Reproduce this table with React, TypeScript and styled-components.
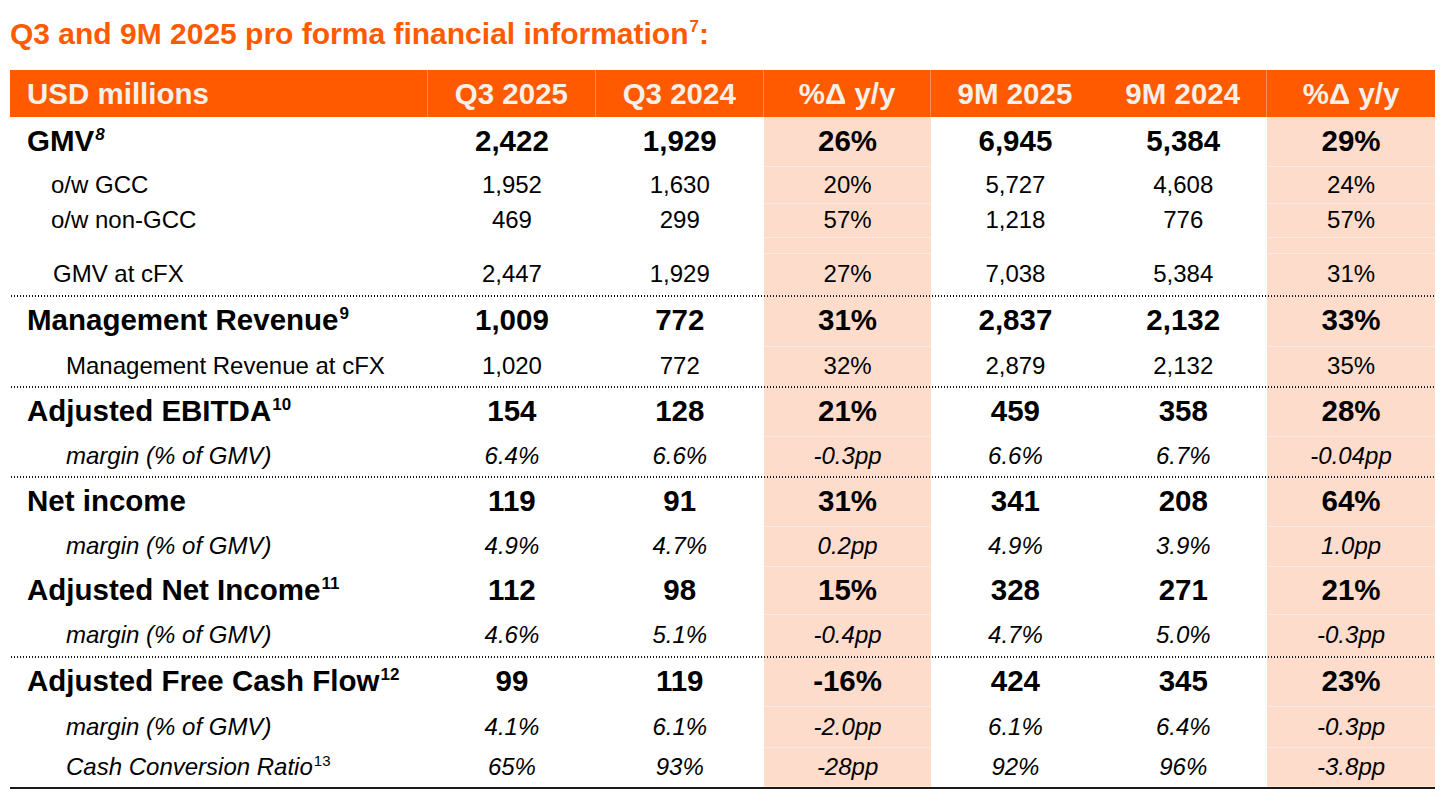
import React from "react";
import styled, { createGlobalStyle, css } from "styled-components";

const colors = {
    orange: "#ff5a00",
    shade: "#fddccc",
    shadeLine: "#fee8df",
    headText: "#f6f0e8",
    ink: "#000000",
};

const GlobalStyle = createGlobalStyle`
    html, body {
        margin: 0;
        padding: 0;
        background: #ffffff;
    }
    body {
        font-family: "Liberation Sans", Arial, sans-serif;
        color: ${colors.ink};
    }
`;

const Page = styled.div`
    width: 1445px;
    height: 805px;
    padding: 0 10px;
    box-sizing: border-box;
    overflow: hidden;
`;

const Title = styled.h2`
    margin: 0;
    height: 70px;
    padding-top: 17px;
    box-sizing: border-box;
    font-size: 30px;
    line-height: 34px;
    font-weight: 700;
    color: ${colors.orange};

    sup {
        font-size: 17px;
        line-height: 0;
        vertical-align: 12px;
        margin-left: 1px;
    }
`;

const Table = styled.div`
    width: 1425px;
    border-bottom: 2px solid #1a1a1a;
`;

const GRID = "418px repeat(6, 1fr)";

const HeadRow = styled.div`
    display: grid;
    grid-template-columns: ${GRID};
    height: 47px;
    background: ${colors.orange};
    color: ${colors.headText};
    font-size: 29.5px;
    font-weight: 700;
`;

const HeadCell = styled.div<{ $first?: boolean; $divider?: boolean }>`
    display: flex;
    align-items: center;
    justify-content: ${(p) => (p.$first ? "flex-start" : "center")};
    padding-left: ${(p) => (p.$first ? "17px" : "0")};
    border-right: 1px solid
        ${(p) => (p.$divider ? "rgba(255, 200, 170, 0.45)" : "transparent")};
    &:last-child {
        border-right: none;
    }
`;

type Kind = "main" | "sub" | "italic";

const Row = styled.div<{ $h: number; $dotted?: boolean }>`
    display: grid;
    grid-template-columns: ${GRID};
    height: ${(p) => p.$h}px;
    box-sizing: border-box;
    position: relative;
    ${(p) =>
        p.$dotted &&
        css`
            &::before {
                content: "";
                position: absolute;
                left: 0;
                right: 0;
                top: -1px;
                height: 2px;
                background-image: radial-gradient(circle, #1a1a1a 0.9px, transparent 1.1px);
                background-size: 3px 2px;
                z-index: 2;
            }
        `}
`;

const kindStyles = {
    main: css`
        font-size: 29.5px;
        font-weight: 700;
        padding-bottom: 3px;
    `,
    sub: css`
        font-size: 24px;
        font-weight: 400;
        padding-bottom: 2px;
    `,
    italic: css`
        font-size: 24px;
        font-weight: 400;
        font-style: italic;
        padding-bottom: 2px;
    `,
};

const Label = styled.div<{ $kind: Kind; $indent: number }>`
    display: flex;
    align-items: center;
    padding-left: ${(p) => p.$indent}px;
    white-space: nowrap;
    ${(p) => kindStyles[p.$kind]}
`;

const LabelText = styled.span`
    line-height: 1.15;
`;

const Sup = styled.sup<{ $italic?: boolean; $kind: Kind }>`
    font-size: ${(p) => (p.$kind === "main" ? "17px" : "15px")};
    font-style: ${(p) => (p.$italic ? "italic" : "normal")};
    font-weight: ${(p) => (p.$kind === "main" ? 700 : 400)};
    line-height: 0;
    vertical-align: ${(p) => (p.$kind === "main" ? "11px" : "9px")};
    margin-left: 1px;
`;

const Value = styled.div<{ $kind: Kind; $shaded?: boolean }>`
    display: flex;
    align-items: center;
    justify-content: center;
    ${(p) => kindStyles[p.$kind]}
    ${(p) =>
        p.$shaded &&
        css`
            background: ${colors.shade};
            box-shadow: inset 0 -1px 0 ${colors.shadeLine};
        `}
`;

interface Line {
    label: string;
    sup?: string;
    supItalic?: boolean;
    kind: Kind;
    indent: number;
    h: number;
    dotted?: boolean;
    vals: string[];
}

const rows: Line[] = [
    { label: "GMV", sup: "8", supItalic: true, kind: "main", indent: 17, h: 50, vals: ["2,422", "1,929", "26%", "6,945", "5,384", "29%"] },
    { label: "o/w GCC", kind: "sub", indent: 41, h: 37, vals: ["1,952", "1,630", "20%", "5,727", "4,608", "24%"] },
    { label: "o/w non-GCC", kind: "sub", indent: 41, h: 34, vals: ["469", "299", "57%", "1,218", "776", "57%"] },
    { label: "", kind: "sub", indent: 41, h: 16, vals: ["", "", "", "", "", ""] },
    { label: "GMV at cFX", kind: "sub", indent: 43, h: 42, vals: ["2,447", "1,929", "27%", "7,038", "5,384", "31%"] },
    { label: "Management Revenue", sup: "9", kind: "main", indent: 17, h: 51, dotted: true, vals: ["1,009", "772", "31%", "2,837", "2,132", "33%"] },
    { label: "Management Revenue at cFX", kind: "sub", indent: 56, h: 40, vals: ["1,020", "772", "32%", "2,879", "2,132", "35%"] },
    { label: "Adjusted EBITDA", sup: "10", kind: "main", indent: 17, h: 50, dotted: true, vals: ["154", "128", "21%", "459", "358", "28%"] },
    { label: "margin (% of GMV)", kind: "italic", indent: 56, h: 40, vals: ["6.4%", "6.6%", "-0.3pp", "6.6%", "6.7%", "-0.04pp"] },
    { label: "Net income", kind: "main", indent: 17, h: 50, dotted: true, vals: ["119", "91", "31%", "341", "208", "64%"] },
    { label: "margin (% of GMV)", kind: "italic", indent: 56, h: 40, vals: ["4.9%", "4.7%", "0.2pp", "4.9%", "3.9%", "1.0pp"] },
    { label: "Adjusted Net Income", sup: "11", kind: "main", indent: 17, h: 48, vals: ["112", "98", "15%", "328", "271", "21%"] },
    { label: "margin (% of GMV)", kind: "italic", indent: 56, h: 42, vals: ["4.6%", "5.1%", "-0.4pp", "4.7%", "5.0%", "-0.3pp"] },
    { label: "Adjusted Free Cash Flow", sup: "12", kind: "main", indent: 17, h: 50, dotted: true, vals: ["99", "119", "-16%", "424", "345", "23%"] },
    { label: "margin (% of GMV)", kind: "italic", indent: 56, h: 41, vals: ["4.1%", "6.1%", "-2.0pp", "6.1%", "6.4%", "-0.3pp"] },
    { label: "Cash Conversion Ratio", sup: "13", kind: "italic", indent: 56, h: 39, vals: ["65%", "93%", "-28pp", "92%", "96%", "-3.8pp"] },
];

const headers = ["Q3 2025", "Q3 2024", "%Δ y/y", "9M 2025", "9M 2024", "%Δ y/y"];
// no divider drawn between the two 9M columns in the source slide
const dividers = [true, true, true, false, true, false];
const shadedCols = [2, 5];

const App = () => {
    return (
        <Page>
            <GlobalStyle />
            <Title>
                Q3 and 9M 2025 pro forma financial information<sup>7</sup>:
            </Title>
            <Table>
                <HeadRow>
                    <HeadCell $first $divider>
                        USD millions
                    </HeadCell>
                    {headers.map((h, i) => (
                        <HeadCell key={i} $divider={dividers[i]}>
                            {h}
                        </HeadCell>
                    ))}
                </HeadRow>
                {rows.map((r, i) => (
                    <Row key={i} $h={r.h} $dotted={r.dotted}>
                        <Label $kind={r.kind} $indent={r.indent}>
                            <LabelText>
                                {r.label}
                                {r.sup && (
                                    <Sup $kind={r.kind} $italic={r.supItalic}>
                                        {r.sup}
                                    </Sup>
                                )}
                            </LabelText>
                        </Label>
                        {r.vals.map((v, j) => (
                            <Value
                                key={j}
                                $kind={r.kind}
                                $shaded={shadedCols.includes(j)}
                            >
                                {v}
                            </Value>
                        ))}
                    </Row>
                ))}
            </Table>
        </Page>
    );
};

export default App;
